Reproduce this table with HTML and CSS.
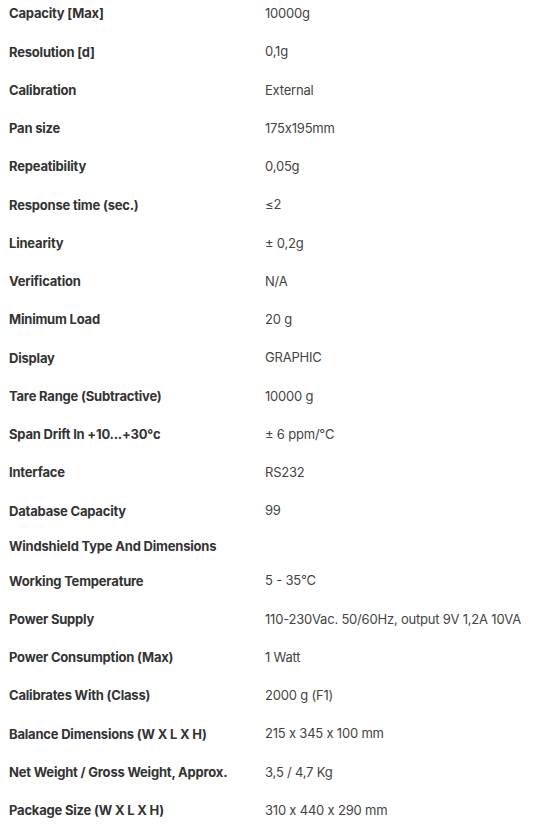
FILE: index.html
```html
<!DOCTYPE html>
<html lang="en">
<head>
<meta charset="utf-8">
<title>Specifications</title>
<link rel="stylesheet" href="styles.css">
</head>
<body>
<div class="specs">
  <div class="label">Capacity [Max]</div><div class="value">10000g</div>
  <div class="label">Resolution [d]</div><div class="value">0,1g</div>
  <div class="label">Calibration</div><div class="value">External</div>
  <div class="label">Pan size</div><div class="value">175x195mm</div>
  <div class="label">Repeatibility</div><div class="value">0,05g</div>
  <div class="label">Response time (sec.)</div><div class="value">≤2</div>
  <div class="label">Linearity</div><div class="value">± 0,2g</div>
  <div class="label">Verification</div><div class="value">N/A</div>
  <div class="label">Minimum Load</div><div class="value">20 g</div>
  <div class="label">Display</div><div class="value">GRAPHIC</div>
  <div class="label">Tare Range (Subtractive)</div><div class="value">10000 g</div>
  <div class="label">Span Drift In +10...+30°c</div><div class="value">± 6 ppm/°C</div>
  <div class="label">Interface</div><div class="value">RS232</div>
  <div class="label">Database Capacity</div><div class="value">99</div>
  <div class="label">Windshield Type And Dimensions</div><div class="value empty"></div>
  <div class="label">Working Temperature</div><div class="value">5 - 35°C</div>
  <div class="label">Power Supply</div><div class="value">110-230Vac. 50/60Hz, output 9V 1,2A 10VA</div>
  <div class="label">Power Consumption (Max)</div><div class="value">1 Watt</div>
  <div class="label">Calibrates With (Class)</div><div class="value">2000 g (F1)</div>
  <div class="label">Balance Dimensions (W X L X H)</div><div class="value">215 x 345 x 100 mm</div>
  <div class="label">Net Weight / Gross Weight, Approx.</div><div class="value">3,5 / 4,7 Kg</div>
  <div class="label">Package Size (W X L X H)</div><div class="value">310 x 440 x 290 mm</div>
</div>
</body>
</html>
```
FILE: styles.css
```css
html, body {
  margin: 0;
  padding: 0;
  background: #ffffff;
}
body {
  font-family: Inter, "Liberation Sans", sans-serif;
  font-size: 13px;
  font-feature-settings: "calt" 0;
  letter-spacing: -0.2px;
}
.specs {
  display: grid;
  grid-template-columns: 256px 1fr;
  align-items: center;
  padding: 0 0 0 9px;
  margin-top: -5px;
}
.label {
  padding: 8px 0;
  line-height: 15.75px;
  font-weight: 700;
  color: #333333;
  white-space: nowrap;
}
.value {
  padding: 7px 0 9px;
  line-height: 22.25px;
  color: #444444;
  white-space: nowrap;
}
.value.empty {
  padding: 0;
  height: 0;
}
```
